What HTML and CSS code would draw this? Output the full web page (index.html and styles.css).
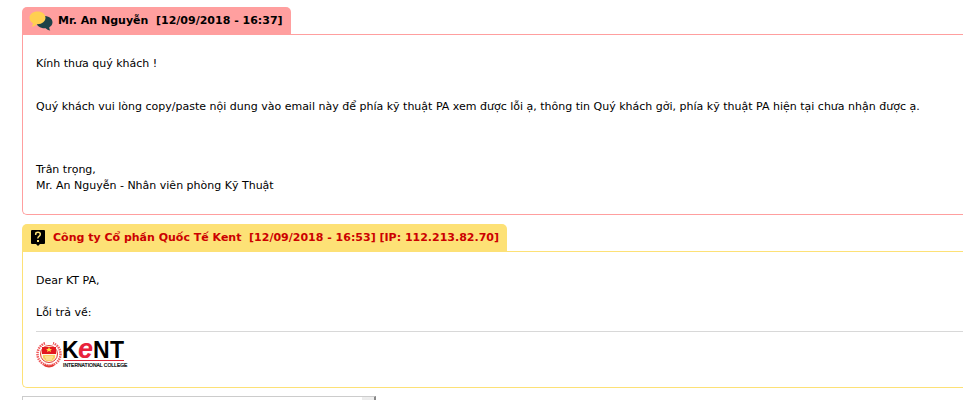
FILE: index.html
```html
<!DOCTYPE html>
<html lang="vi">
<head>
    <meta charset="UTF-8">
    <meta name="viewport" content="width=device-width, initial-scale=1.0">
    <title>Ticket</title>
    <link rel="stylesheet" href="styles.css">
</head>
<body>
    <div class="ticket">
        <div class="message message-staff">
            <div class="message-title">
                <svg class="icon-chat" width="24" height="20" viewBox="0 0 24 20">
                    <path fill="#1c4248" d="M15 5c5 0 8.500 2.600 8.500 6.300 0 2.200-1.200 3.900-3.200 5 0 1.200.2 2.200 1 3.200-2-.2-3.600-1-4.600-2.200-5.400.3-9.200-2.200-9.200-6S10.500 5 15 5z"/>
                    <path fill="#ffd050" d="M8.500.5c4.700 0 8 2.700 8 6.300s-3.300 6.400-8 6.400h-1c-1.200 1.600-3 2.400-5 2.300 1-1 1.500-2 1.400-3.300C1.800 11 .5 9.200.5 6.800.5 3.200 4 .5 8.500.5z"/>
                </svg>
                <span>Mr. An Nguyễn&nbsp; [12/09/2018 - 16:37]</span>
            </div>
            <div class="message-body">
                <p class="greeting">Kính thưa quý khách !</p>
                <p class="content">Quý khách vui lòng copy/paste nội dung vào email này để phía kỹ thuật PA xem được lỗi ạ, thông tin Quý khách gởi, phía kỹ thuật PA hiện tại chưa nhận được ạ.</p>
                <p>Trân trọng,<br>Mr. An Nguyễn - Nhân viên phòng Kỹ Thuật</p>
            </div>
        </div>

        <div class="message message-customer">
            <div class="message-title">
                <svg class="icon-question" width="14" height="16" viewBox="0 0 14 16">
                    <path fill="#000" d="M1 0h12q1 0 1 1v12q0 1-1 1H9l-2 2-2-2H1q-1 0-1-1V1q0-1 1-1z"/>
                    <path fill="none" stroke="#fde176" stroke-width="1.500" d="M4.700 5V4q0-1.700 2.300-1.700T9.300 4.300Q9.300 5.500 8 6.300T7 8.500"/>
                    <path fill="#fde176" d="M6 10h2v2H6z"/>
                </svg>
                <span>Công ty Cổ phần Quốc Tế Kent&nbsp; [12/09/2018 - 16:53] [IP: 112.213.82.70]</span>
            </div>
            <div class="message-body">
                <p>Dear KT PA,<br><br>Lỗi trả về:</p>
                <hr>
                <svg class="logo" width="94" height="30" viewBox="0 0 94 30" role="img" aria-label="Kent International College">
                    <circle cx="13" cy="14" r="11.500" fill="none" stroke="#ef5a5c" stroke-width="2.500" stroke-dasharray="1.500 .8"/>
                    <path fill="#fff" d="M9 0h8v4H9z"/>
                    <circle cx="13" cy="14" r="8.500" fill="#fff8e0" stroke="#e23a35"/>
                    <path fill="#e3191f" d="M6 7h14v7H6z"/>
                    <path fill="#ffe04a" d="M13 7l1 2h2l-1.500 1.200.5 1.800-2-1-2 1 .5-1.800L10 9h2z"/>
                    <path fill="#f8cf63" d="M7 15h12v3l-3 3h-6l-3-3z"/>
                    <path fill="none" stroke="#fff3bd" d="M9 17h8M10 19h6"/>
                    <path fill="none" stroke="#e23a35" stroke-width="2" d="M8 25q5 3 10 0"/>
                    <text class="logo-name" y="18"><tspan x="26">K</tspan><tspan class="logo-e" x="42">e</tspan><tspan x="57">N</tspan><tspan x="74">T</tspan></text>
                    <path fill="#dc2237" d="M28 20h60v1H28z"/>
                    <text class="logo-sub" x="27" y="27">INTERNATIONAL COLLEGE</text>
                </svg>
            </div>
        </div>

        <select class="reply-select" aria-label="Chọn">
            <option></option>
        </select>
    </div>
</body>
</html>
```

FILE: styles.css
```css
body {
    font-family: Verdana, "DejaVu Sans", sans-serif;
    font-size: 11px;
    line-height: 16px;
    color: #000;
    margin: 0;
    height: 100vh;
    overflow: hidden;
    background-color: #fff;
}

.ticket {
    padding: 7px 0 0 22px;
}

.message {
    margin-bottom: 8px;
}
.message-title {
    display: flex;
    align-items: center;
    width: fit-content;
    height: 27px;
    border-radius: 5px 5px 0 0;
    font-weight: bold;
}
.message-body {
    border: 1px solid;
    border-right: none;
    border-radius: 0 0 0 5px;
    padding: 21px 0 20px 13px;
}
.message-body p {
    margin: 0;
}
.message-body hr {
    margin: 10px 0 8px;
    border: none;
    border-top: 1px solid #d8d8d8;
}

.message-staff {
    margin-bottom: 9px;
}
.message-staff .message-title {
    background-color: #ff9f9f;
    gap: 5px;
    padding: 0 8px 0 7px;
}
.message-staff .message-body {
    border-color: #ff9f9f;
}
.message-body .greeting {
    margin-bottom: 27px;
}
.message-body .content {
    margin-bottom: 47px;
}

.message-customer .message-title {
    background-color: #fde176;
    color: #c00;
    gap: 8px;
    padding: 0 8px 0 9px;
}
.message-customer .message-body {
    border-color: #fde176;
    padding-bottom: 17px;
}

.logo {
    display: block;
    overflow: visible;
}
.logo-name {
    font-family: "Liberation Sans", Arial, sans-serif;
    font-size: 23px;
    font-weight: bold;
}
.logo-e {
    font-size: 27px;
    font-style: italic;
    fill: #e8233c;
}
.logo-sub {
    font-family: "Liberation Sans", Arial, sans-serif;
    font-size: 5px;
    stroke: #000;
    stroke-width: 0.2;
}

.reply-select {
    display: block;
    appearance: none;
    width: 354px;
    height: 24px;
    border: 1px solid #ccc;
    border-right: 2px solid #888;
    border-radius: 0;
    background: linear-gradient(#eee, #ddd) right / 12px 100% no-repeat #fff;
}
```
